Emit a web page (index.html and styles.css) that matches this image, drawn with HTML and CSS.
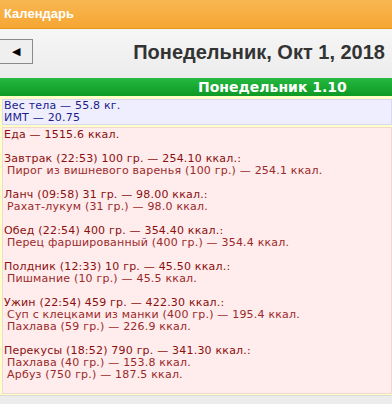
FILE: index.html
```html
<!DOCTYPE html>
<html lang="ru">
<head>
    <meta charset="UTF-8">
    <title>Календарь</title>
    <link rel="stylesheet" href="styles.css">
</head>
<body>
    <div class="topbar">Календарь</div>

    <div class="daybar">
        <button class="prev">&#9664;</button>
        <h1>Понедельник, Окт 1, 2018</h1>
    </div>

    <div class="dayname">Понедельник 1.10</div>

    <div class="day">
        <div class="box body">
            Вес тела — 55.8 кг.<br>
            ИМТ — 20.75
        </div>
        <div class="box food">
            <div class="meal">Еда — 1515.6 ккал.</div>

            <div class="meal">Завтрак (22:53) 100 гр. — 254.10 ккал.:</div>
            <div class="item">Пирог из вишневого варенья (100 гр.) — 254.1 ккал.</div>

            <div class="meal">Ланч (09:58) 31 гр. — 98.00 ккал.:</div>
            <div class="item">Рахат-лукум (31 гр.) — 98.0 ккал.</div>

            <div class="meal">Обед (22:54) 400 гр. — 354.40 ккал.:</div>
            <div class="item">Перец фаршированный (400 гр.) — 354.4 ккал.</div>

            <div class="meal">Полдник (12:33) 10 гр. — 45.50 ккал.:</div>
            <div class="item">Пишмание (10 гр.) — 45.5 ккал.</div>

            <div class="meal">Ужин (22:54) 459 гр. — 422.30 ккал.:</div>
            <div class="item">Суп с клецками из манки (400 гр.) — 195.4 ккал.</div>
            <div class="item">Пахлава (59 гр.) — 226.9 ккал.</div>

            <div class="meal">Перекусы (18:52) 790 гр. — 341.30 ккал.:</div>
            <div class="item">Пахлава (40 гр.) — 153.8 ккал.</div>
            <div class="item">Арбуз (750 гр.) — 187.5 ккал.</div>
        </div>
    </div>
    <div class="footer"></div>
</body>
</html>
```

FILE: styles.css
```css
body {
    margin: 0;
    font-family: "DejaVu Sans", sans-serif;
    font-size: 11px;
    letter-spacing: 0.2px;
    background-color: #ececec;
    overflow: hidden;
}

.topbar {
    height: 28px;
    line-height: 28px;
    padding-left: 4px;
    background: linear-gradient(#f9b752, #f5a632);
    border-bottom: 1px solid #e8941c;
    color: #fff;
    font-family: "Liberation Sans", Arial, sans-serif;
    font-weight: bold;
    font-size: 13px;
    letter-spacing: 0;
}

.daybar {
    display: flex;
    align-items: center;
    height: 49px;
    background: linear-gradient(#f6f6f6, #ececec);
}

.prev {
    width: 34px;
    height: 25px;
    margin-left: -1px;
    margin-bottom: 5px;
    padding: 0;
    border: 1px solid #8a8a8a;
    background: #efefef;
    color: #000;
    font-size: 11px;
    line-height: 23px;
}

.daybar h1 {
    flex: 1;
    margin: 0 0 3px;
    padding-right: 7px;
    text-align: right;
    color: #333;
    font-family: "Liberation Sans", Arial, sans-serif;
    font-size: 20px;
    font-weight: bold;
    letter-spacing: 0;
}

.dayname {
    height: 18px;
    line-height: 18px;
    padding-left: 198px;
    background: linear-gradient(#26b840, #0c9a24);
    color: #fff;
    font-size: 14px;
    font-weight: bold;
    letter-spacing: 0;
}

.day {
    background-color: #ffffc8;
    padding: 3px 0 1px 2px;
    border-bottom: 1px solid #dcdcd0;
}

.box {
    padding-left: 1px;
    line-height: 12px;
}

.body {
    background-color: #eeeeff;
    border: 1px solid #d8d8f0;
    color: #1c1c8c;
    margin-bottom: 2px;
}

.food {
    background-color: #ffecec;
    border: 1px solid #f2d8d0;
    color: #8a1010;
    padding-top: 1px;
    padding-bottom: 12px;
}

.meal {
    margin-top: 12px;
}

.meal:first-child {
    margin-top: 0;
}

.item {
    padding-left: 3px;
    color: #9a2a2a;
}

.footer {
    height: 12px;
}
```
